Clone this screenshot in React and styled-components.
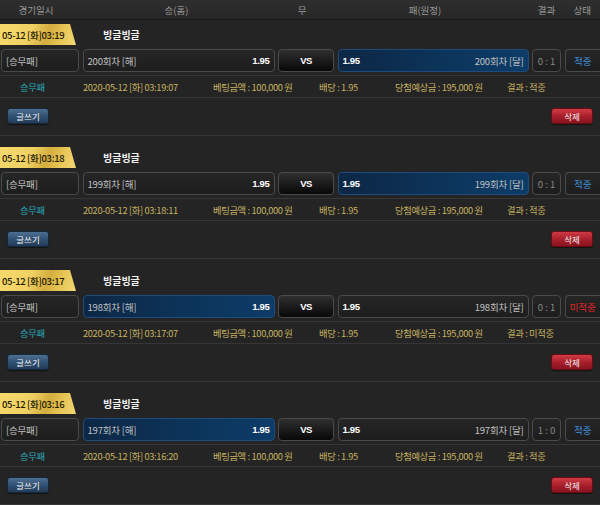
import React from "react";
import styled, { createGlobalStyle } from "styled-components";

const Global = createGlobalStyle`
  html, body { margin: 0; padding: 0; background: #242424; }
  body { font-family: "Noto Sans CJK KR", "Noto Sans", sans-serif; }
`;

const Page = styled.div`
  width: 600px;
  background: #242424;
  overflow: hidden;
`;

const Header = styled.div`
  display: grid;
  grid-template-columns: 78px 192px 56px 191px 29px 1fr;
  column-gap: 3.5px;
  padding-left: 1px;
  height: 20px;
  align-items: center;
  background: linear-gradient(#2e2e2e, #272727);
  border-bottom: 1px solid #161616;
  color: #9a9a9a;
  font-size: 9.5px;
  box-sizing: border-box;
`;

const HeadCell = styled.div`
  text-align: center;
  transform: translateX(${(p) => p.$shift || 0}px);
`;

const Block = styled.div`
  padding-top: 4px;
  border-bottom: 1px solid #363636;
  margin-bottom: 7px;
`;

const TitleRow = styled.div`
  display: flex;
  align-items: center;
  height: 21px;
`;

const Tab = styled.div`
  width: 76px;
  height: 21px;
  box-sizing: border-box;
  padding-left: 2px;
  display: flex;
  align-items: center;
  clip-path: polygon(0 0, 70px 0, 76px 100%, 0 100%);
  background: linear-gradient(110deg, #f6d96c 0%, #efd063 40%, #d4ad3e 62%, #e8c658 80%, #f4d876 100%);
  color: #231a05;
  font-size: 9.5px;
  font-weight: 500;
  letter-spacing: -0.35px;
  white-space: nowrap;
`;

const League = styled.div`
  margin-left: 27px;
  color: #f2f2f2;
  font-size: 10px;
  font-weight: 700;
`;

const BoxRow = styled.div`
  display: grid;
  grid-template-columns: 78px 192px 56px 191px 29px 1fr;
  column-gap: 3.5px;
  padding-left: 1px;
  margin-top: 4px;
  height: 23px;
`;

const Box = styled.div`
  box-sizing: border-box;
  border: 1px solid ${(p) => (p.$sel ? "#1f4c7c" : "#4a4a4a")};
  border-radius: 4px;
  background: ${(p) =>
    p.$sel
      ? "linear-gradient(90deg, #0d2745 0%, #0c3358 50%, #0d3c68 100%)"
      : p.$vs
      ? "linear-gradient(#2f2f2f, #080808)"
      : "linear-gradient(#262626, #1d1d1d)"};
  display: flex;
  align-items: center;
  justify-content: ${(p) => p.$justify || "space-between"};
  padding: 0 4px;
  font-size: 9.5px;
  color: ${(p) => p.$color || "#bdbdbd"};
  white-space: nowrap;
  ${(p) => p.$last && "border-right: none; border-top-right-radius: 0; border-bottom-right-radius: 0;"}
`;

const Odds = styled.span`
  color: #ffffff;
  font-weight: 700;
  font-family: "Liberation Sans", sans-serif;
  font-size: 9.5px;
  letter-spacing: -0.3px;
`;

const Team = styled.span`
  color: #c2c2c2;
  letter-spacing: -0.2px;
`;

const Vs = styled.span`
  color: #fff;
  font-weight: 700;
  font-family: "Liberation Sans", sans-serif;
  font-size: 9.5px;
  letter-spacing: -0.5px;
`;

const InfoRow = styled.div`
  margin-top: 3px;
  border-top: 1px solid #363636;
  border-bottom: 1px solid #363636;
  height: 21px;
  display: grid;
  grid-template-columns: 63px 130px 106px 76px 112px 1fr;
  padding-left: 20px;
  align-items: center;
  font-size: 9.3px;
  color: #c6b261;
  white-space: nowrap;
  letter-spacing: -0.35px;
`;

const Info = styled.span`
  color: ${(p) => p.$color || "#c6b261"};
`;

const ButtonRow = styled.div`
  display: flex;
  justify-content: space-between;
  padding: 10px 7px 11px 7px;
`;

const Btn = styled.div`
  width: 42px;
  height: 16px;
  box-sizing: border-box;
  border-radius: 3px;
  display: flex;
  align-items: center;
  justify-content: center;
  color: #f2f2f2;
  font-size: 8.5px;
  border: 1px solid ${(p) => (p.$red ? "#6a0c14" : "#15283c")};
  background: ${(p) =>
    p.$red
      ? "linear-gradient(#d03a44, #a51e2a 55%, #8a1420)"
      : "linear-gradient(#4d6f90, #2f4f70 55%, #223c58)"};
  box-shadow: 0 1px 1px rgba(0, 0, 0, 0.5);
`;

const data = [
  { date: "05-12 [화]03:19", round: "200회차", sel: "away", score: "0 : 1", ok: true, time: "2020-05-12 [화] 03:19:07" },
  { date: "05-12 [화]03:18", round: "199회차", sel: "away", score: "0 : 1", ok: true, time: "2020-05-12 [화] 03:18:11" },
  { date: "05-12 [화]03:17", round: "198회차", sel: "home", score: "0 : 1", ok: false, time: "2020-05-12 [화] 03:17:07" },
  { date: "05-12 [화]03:16", round: "197회차", sel: "home", score: "1 : 0", ok: true, time: "2020-05-12 [화] 03:16:20" },
];

export default function App() {
  return (
    <Page>
      <Global />
      <Header>
        <HeadCell $shift={-4}>경기일시</HeadCell>
        <HeadCell $shift={-2}>승(홈)</HeadCell>
        <HeadCell $shift={-4}>무</HeadCell>
        <HeadCell $shift={-8}>패(원정)</HeadCell>
        <HeadCell>결과</HeadCell>
        <HeadCell>상태</HeadCell>
      </Header>
      {data.map((d) => (
        <Block key={d.date}>
          <TitleRow>
            <Tab>{d.date}</Tab>
            <League>빙글빙글</League>
          </TitleRow>
          <BoxRow>
            <Box $justify="flex-start"><Team>[승무패]</Team></Box>
            <Box $sel={d.sel === "home"}>
              <Team>{d.round} [해]</Team>
              <Odds>1.95</Odds>
            </Box>
            <Box $vs $justify="center"><Vs>VS</Vs></Box>
            <Box $sel={d.sel === "away"}>
              <Odds>1.95</Odds>
              <Team>{d.round} [달]</Team>
            </Box>
            <Box $justify="center" $color="#8a8a8a">{d.score}</Box>
            <Box $justify="center" $last $color={d.ok ? "#3f8fdc" : "#e02424"}>
              {d.ok ? "적중" : "미적중"}
            </Box>
          </BoxRow>
          <InfoRow>
            <Info $color="#2aa9b9">승무패</Info>
            <Info>{d.time}</Info>
            <Info>베팅금액 : 100,000 원</Info>
            <Info>배당 : 1.95</Info>
            <Info>당첨예상금 : 195,000 원</Info>
            <Info>결과 : {d.ok ? "적중" : "미적중"}</Info>
          </InfoRow>
          <ButtonRow>
            <Btn>글쓰기</Btn>
            <Btn $red>삭제</Btn>
          </ButtonRow>
        </Block>
      ))}
    </Page>
  );
}
